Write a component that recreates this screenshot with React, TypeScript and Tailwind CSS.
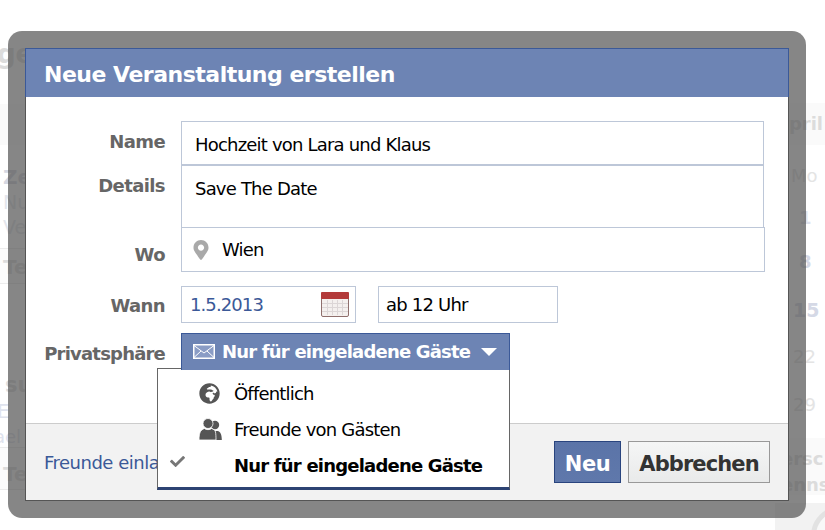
import React from "react";
import { FaCheck, FaGlobeAfrica, FaMapMarkerAlt } from "react-icons/fa";

const font = "font-['DejaVu_Sans',sans-serif]";

const Background = () => {
  return (
    <div className="flex justify-between h-[530px] overflow-hidden text-[#dfe2e9]">
      <div className="w-[120px] pt-[35px]">
        <div className="h-[39px] -ml-[3px] text-[26px] leading-[39px] font-bold text-[#dcdcdc]">ge</div>
        <div className="h-[41px] mt-[30px] mb-[20px] bg-[#fafafa]"></div>
        <div className="pl-[3px] text-[20px] leading-[25px] font-bold text-[#d5d8e2]">Ze</div>
        <div className="pl-[3px] text-[19px] leading-[25px] text-[#e3e6ec]">Nu</div>
        <div className="pl-[3px] text-[19px] leading-[25px] text-[#e3e6ec]">Ve</div>
        <div className="mt-[8px] h-[36px] pl-[3px] border-y border-[#ececec] bg-[#fcfcfc] text-[20px] leading-[36px] font-bold text-[#dcdcdc]">Te</div>
        <div className="mt-[88px] pl-[5px] text-[21px] leading-[26px] font-bold text-[#dcdcdc]">su</div>
        <div className="-ml-[3px] text-[20px] leading-[26px] text-[#dfe3ee]">E</div>
        <div className="h-[23px] -ml-[6px] text-[18px] leading-[26px] text-[#dfe3ee]">ael</div>
        <div className="h-[43px] pl-[3px] border-y border-[#ececec] bg-[#fcfcfc] text-[20px] leading-[52px] font-bold text-[#dcdcdc]">Te</div>
      </div>
      <div className="w-[50px] flex flex-col">
        <div className="mt-[103px] h-[42px] bg-[#fafafa] pr-[2px] text-right text-[18px] leading-[42px] font-bold text-[#dcdcdc]">April</div>
        <div className="pl-[16px] mt-[19px] h-[24px] text-[18px] leading-[24px] text-[#e4e4e4]">Mo</div>
        <div className="pl-[24px] mt-[17px] h-[26px] text-[18px] font-bold leading-[26px] text-[#dfe3ee]">1</div>
        <div className="pl-[24px] mt-[18px] h-[26px] text-[18px] font-bold leading-[26px] text-[#d5d9e6]">8</div>
        <div className="pl-[18px] mt-[22px] h-[26px] text-[19px] font-bold leading-[26px] text-[#d5d9e6]">15</div>
        <div className="pl-[18px] mt-[21px] h-[26px] text-[18px] leading-[26px] text-[#e4e4e4]">22</div>
        <div className="pl-[18px] mt-[22px] h-[26px] text-[18px] leading-[26px] text-[#e4e4e4]">29</div>
        <div className="mt-[20px] h-[64px] bg-[#fafafa] pl-[6px] pt-[8px] text-[18px] leading-[26px] font-bold text-[#dcdcdc] overflow-hidden whitespace-nowrap">ersc<br />enns</div>
        <div className="mt-[8px] h-[30px] bg-[#f2f2f2] overflow-hidden">
          <div className="ml-[36px] mt-[3px] w-[60px] h-[60px] rounded-full border-[5px] border-[#e2e2e2] bg-[#f8f8f8]"></div>
        </div>
      </div>
    </div>
  );
};

const CalendarIcon = () => {
  return (
    <svg width="28" height="25" viewBox="0 0 28 25">
      <rect x="0.5" y="0.5" width="27" height="24" rx="1.5" fill="#f4f0ee" stroke="#8f6f6c" />
      <rect x="0" y="0" width="28" height="7" rx="1" fill="#b33a3a" />
      <path d="M1 11.5h26M1 15.5h26M1 19.5h26M6.5 8v15M11.5 8v15M16.5 8v15M21.5 8v15" stroke="#dcd6d6" strokeWidth="1" />
    </svg>
  );
};

const MailIcon = () => {
  return (
    <svg width="22" height="15" viewBox="0 0 22 15" fill="none">
      <rect x="0.75" y="0.75" width="20.5" height="13.5" fill="#8a9cc5" stroke="#fff" strokeWidth="1.5" />
      <path d="M1 1.5l10 7.5 10-7.5M1 13.5l7-6.5M21 13.5l-7-6.5" stroke="#fff" strokeWidth="1" />
    </svg>
  );
};

const FriendsIcon = () => {
  return (
    <svg width="23" height="23" viewBox="0 0 23 23" fill="#555">
      <circle cx="16" cy="7" r="4.2" />
      <path d="M13 13h6c2.500 1 3.600 3 3.800 9H14z" />
      <circle cx="9" cy="5.500" r="5" stroke="#fff" strokeWidth="0.8" />
      <path d="M5.500 10.500c1 1.500 6 1.500 7 0 2.500 1 3.500 1.500 4 3.500.4 2 .5 5 .5 8H0c0-4 .5-7 1.500-8.500 1-1.500 2.500-2.500 4-3z" stroke="#fff" strokeWidth="0.8" />
    </svg>
  );
};

const Row = ({ label, labelClass, children }: { label: string; labelClass: string; children: React.ReactNode }) => {
  return (
    <div className="flex">
      <div className={`w-[139px] shrink-0 text-right text-[18px] font-bold text-[#666] ${labelClass}`}>{label}</div>
      <div className="ml-[16px] flex-1 min-w-0">{children}</div>
    </div>
  );
};

const Field = "border border-[#bdc7d8] bg-white text-[18px] text-black tracking-[-0.8px]";

export default function App() {
  return (
    <div className={`relative w-[825px] h-[530px] overflow-hidden bg-white ${font}`}>
      <Background />

      <div className="absolute left-[8px] top-[31px] w-[798px] h-[487px] p-[17px] rounded-[14px] bg-[rgba(82,82,82,0.7)]">
        <div className="relative flex flex-col h-full bg-white border-x border-b border-[#555]">
          <div className="-mx-px h-[49px] shrink-0 border-x border-t border-[#3b5998] bg-[#6d84b4] pl-[18px] text-[22px] leading-[51px] font-bold text-white tracking-[-0.5px]">
            Neue Veranstaltung erstellen
          </div>

          <div className="flex-1 pt-[24px] pr-[24px]">
            <Row label="Name" labelClass="leading-[42px] tracking-[-0.6px]">
              <div className={`${Field} h-[44px] pl-[13px] leading-[45px]`}>Hochzeit von Lara und Klaus</div>
            </Row>
            <Row label="Details" labelClass="leading-[42px] tracking-[-0.6px]">
              <div className={`${Field} h-[63px] pl-[13px] leading-[46px]`}>Save The Date</div>
            </Row>
            <Row label="Wo" labelClass="pt-[9px] leading-[35px] tracking-[-0.6px]">
              <div className={`${Field} -mt-px -mr-px h-[45px] flex items-center pl-[9px]`}>
                <FaMapMarkerAlt className="text-[#a9a9a9] text-[20px]" />
                <span className="ml-[11px]">Wien</span>
              </div>
            </Row>
            <div className="mt-[14px]">
              <Row label="Wann" labelClass="pt-[3px] leading-[34px] tracking-[-0.6px]">
                <div className="flex gap-[22px]">
                  <div className={`${Field} w-[175px] h-[37px] flex items-center justify-between pl-[8px] pr-[6px]`}>
                    <span className="text-[#3b5998] tracking-[-0.9px]">1.5.2013</span>
                    <CalendarIcon />
                  </div>
                  <div className={`${Field} w-[180px] h-[37px] pl-[7px] leading-[35px]`}>ab 12 Uhr</div>
                </div>
              </Row>
            </div>
            <div className="mt-[10px]">
              <Row label="Privatsphäre" labelClass="leading-[42px] tracking-[-0.8px]">
                <div className="w-[329px]">
                  <div className="relative z-10 h-[37px] border border-[#3b5998] border-b-0 bg-[#6d84b4] flex items-center pl-[11px] pb-[2px] text-[18px] font-bold text-white tracking-[-0.8px]">
                    <MailIcon />
                    <span className="ml-[7px]">Nur für eingeladene Gäste</span>
                    <span className="ml-[11px] mt-[2px] w-0 h-0 border-x-[8px] border-t-[8px] border-x-transparent border-t-white"></span>
                  </div>
                </div>
              </Row>
            </div>
          </div>

          <div className="h-[77px] shrink-0 border-t border-[#ccc] bg-[#f2f2f2] flex items-center justify-between pl-[18px] pr-[18px]">
            <span className="mt-[1px] text-[18px] text-[#3b5998] tracking-[-0.5px]">Freunde einladen</span>
            <div className="flex gap-[7px]">
              <div className="w-[67px] h-[42px] border border-[#29447e] bg-gradient-to-b from-[#5b74a8] to-[#5f78ab] text-center text-[21px] leading-[44px] font-bold text-white tracking-[-0.5px]">Neu</div>
              <div className="w-[142px] h-[42px] border border-[#999] bg-gradient-to-b from-[#f5f6f6] to-[#e9eaea] text-center text-[21px] leading-[44px] font-bold text-[#333] tracking-[-0.9px]">Abbrechen</div>
            </div>
          </div>

          <div className="absolute left-[131px] top-[320px] w-[353px] h-[122px] border-x border-t border-[#666] border-b-[3px] border-b-[#2d4373] bg-white pt-[6px] text-[18px] text-black tracking-[-0.8px]">
            <div className="flex items-center h-[36px]">
              <span className="w-[41px]"></span>
              <FaGlobeAfrica className="text-[#555] text-[21px]" />
              <span className="ml-[14px]">Öffentlich</span>
            </div>
            <div className="flex items-center h-[36px]">
              <span className="w-[41px]"></span>
              <FriendsIcon />
              <span className="ml-[12px]">Freunde von Gästen</span>
            </div>
            <div className="flex items-center h-[36px] font-bold">
              <FaCheck className="ml-[12px] mb-[8px] text-[#777] text-[15px]" />
              <span className="ml-[49px]">Nur für eingeladene Gäste</span>
            </div>
          </div>
        </div>
      </div>
    </div>
  );
}
